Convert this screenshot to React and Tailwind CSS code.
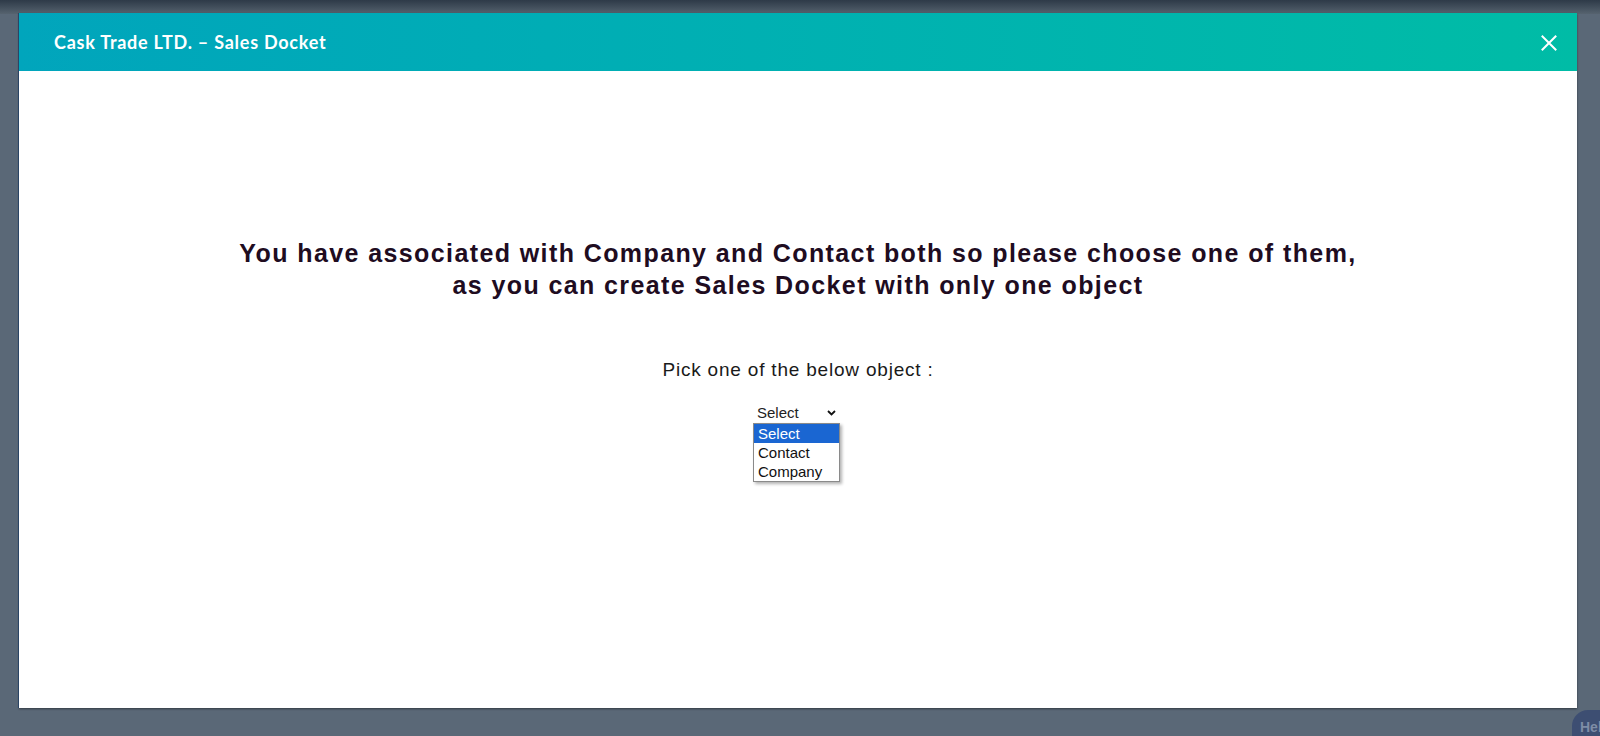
import React from "react";

export default function App() {
  return (
    <div className="relative w-full h-[736px] overflow-hidden bg-[#5a6877] pt-[13px] pl-[19px]" style={{ fontFamily: '"Liberation Sans", Arial, sans-serif' }}>
      <div className="absolute left-0 top-0 w-full h-[14px] bg-gradient-to-b from-[#2e3a48] to-[#56636f]" />
      <div className="relative w-[1558px] h-[695px] bg-white flex flex-col shadow-[-1px_0_0_#2a4566,0_1px_2px_rgba(0,0,0,0.45)]">
        <div className="h-[58px] shrink-0 flex items-center justify-between pl-[35px] pr-[20px] bg-gradient-to-r from-[#01a5bc] to-[#00bca6]">
          <span className="text-white text-[18px] font-bold tracking-[0.75px] mt-[1px]" style={{ fontFamily: 'Lato, "Open Sans", sans-serif' }}>
            Cask Trade LTD. – Sales Docket
          </span>
          <svg width="16" height="16" viewBox="0 0 16 16" className="mt-[1px]">
            <path d="M1.5 1.5 L14.5 14.5 M14.5 1.5 L1.5 14.5" stroke="white" strokeWidth="2" strokeLinecap="square" />
          </svg>
        </div>
        <div className="flex flex-col items-center pt-[166px]">
          <h1 className="text-center text-[25px] leading-[32px] font-bold tracking-[1.4px] text-[#200c1f]">
            You have associated with Company and Contact both so please choose one of them,
            <br />
            as you can create Sales Docket with only one object
          </h1>
          <p className="mt-[57px] text-[19px] leading-[24px] tracking-[0.8px] text-[#1a1a1a]">Pick one of the below object :</p>
          <div className="relative mt-[22px] ml-[-3px] w-[87px] h-[18px] flex items-center justify-between pl-[4px] pr-[4px] text-[15px] leading-[18px] text-[#222]">
            <span>Select</span>
            <svg width="9" height="6" viewBox="0 0 9 6">
              <path d="M1 1 L4.5 4.5 L8 1" stroke="#111" strokeWidth="1.8" fill="none" />
            </svg>
            <div className="absolute left-0 top-[19px] w-[87px] border border-[#8a8a8a] bg-white shadow-[2px_2px_3px_rgba(0,0,0,0.3)] text-[15px]">
              <div className="h-[19px] leading-[19px] pl-[4px] bg-[#1a66d2] text-white">Select</div>
              <div className="h-[19px] leading-[19px] pl-[4px] text-[#111]">Contact</div>
              <div className="h-[19px] leading-[19px] pl-[4px] text-[#111]">Company</div>
            </div>
          </div>
        </div>
      </div>
      <div className="absolute left-[1572px] top-[710px] w-[80px] h-[50px] rounded-[16px] bg-[#3d4e72] pl-[8px] pt-[7px] text-[14px] font-bold text-[#7e8ca6]">
        Help
      </div>
    </div>
  );
}
